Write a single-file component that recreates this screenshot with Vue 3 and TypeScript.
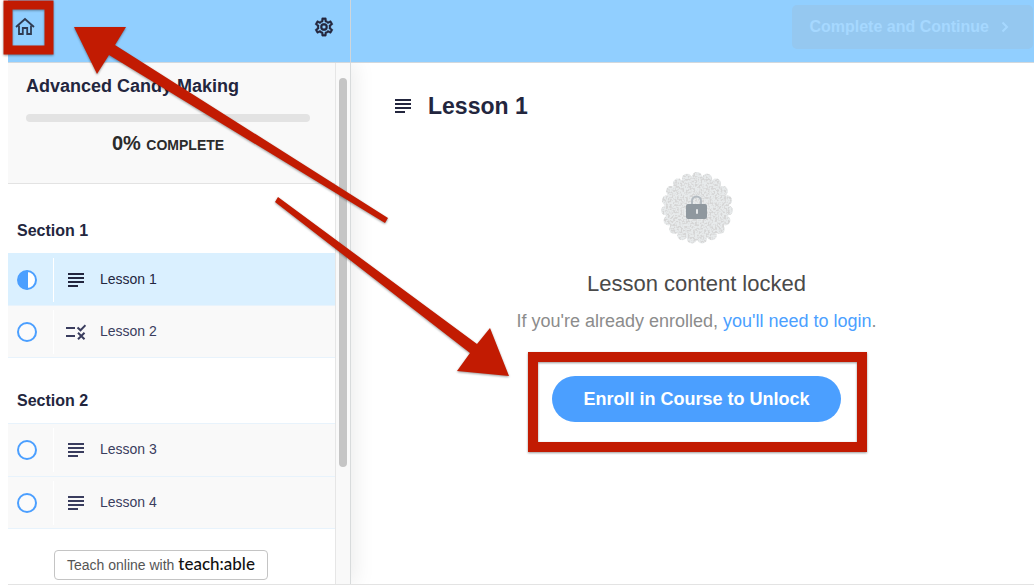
<script setup lang="ts">
type LessonKind = 'text' | 'quiz'

interface Lesson {
  title: string
  kind: LessonKind
  current: boolean
}

interface Section {
  title: string
  lessons: Lesson[]
}

const sections: Section[] = [
  {
    title: 'Section 1',
    lessons: [
      { title: 'Lesson 1', kind: 'text', current: true },
      { title: 'Lesson 2', kind: 'quiz', current: false },
    ],
  },
  {
    title: 'Section 2',
    lessons: [
      { title: 'Lesson 3', kind: 'text', current: false },
      { title: 'Lesson 4', kind: 'text', current: false },
    ],
  },
]

const scallopCount = 19
const scallops = Array.from({ length: scallopCount }, (_, i) => {
  const angle = (i * 2 * Math.PI) / scallopCount - Math.PI / 2
  return { cx: 36 + 31 * Math.cos(angle), cy: 36 + 31 * Math.sin(angle) }
})
</script>

<template>
  <div class="page">
    <header class="topbar">
      <div class="topbar-left">
        <a href="#" class="icon-link" aria-label="Home">
          <svg width="20" height="20" viewBox="0 0 20 20" fill="none" stroke="#2f3b52" stroke-width="1.8">
            <path d="M1 11 L10 3 L19 11" />
            <path d="M4 9.5 V18 H7.8 V12 H12.2 V18 H16 V9.5" />
          </svg>
        </a>
        <button type="button" class="icon-link" aria-label="Settings">
          <svg width="22" height="22" viewBox="0 0 24 24" fill="#23263e" stroke="#23263e" stroke-width="0.4">
            <path d="M19.43 12.98c.04-.32.07-.64.07-.98 0-.34-.03-.66-.07-.98l2.11-1.65c.19-.15.24-.42.12-.64l-2-3.46c-.09-.16-.26-.25-.44-.25-.06 0-.12.01-.17.03l-2.49 1c-.52-.4-1.08-.73-1.69-.98l-.38-2.65C14.46 2.18 14.25 2 14 2h-4c-.25 0-.46.18-.49.42l-.38 2.65c-.61.25-1.17.59-1.69.98l-2.49-1c-.06-.02-.12-.03-.18-.03-.17 0-.34.09-.43.25l-2 3.46c-.13.22-.07.49.12.64l2.11 1.65c-.04.32-.07.65-.07.98 0 .33.03.66.07.98l-2.11 1.65c-.19.15-.24.42-.12.64l2 3.46c.09.16.26.25.44.25.06 0 .12-.01.17-.03l2.49-1c.52.4 1.08.73 1.69.98l.38 2.65c.03.24.24.42.49.42h4c.25 0 .46-.18.49-.42l.38-2.65c.61-.25 1.17-.59 1.69-.98l2.49 1c.06.02.12.03.18.03.17 0 .34-.09.43-.25l2-3.46c.12-.22.07-.49-.12-.64l-2.11-1.65zm-1.98-1.71c.04.31.05.52.05.73 0 .21-.02.43-.05.73l-.14 1.13.89.7 1.08.84-.7 1.21-1.27-.51-1.04-.42-.9.68c-.43.32-.84.56-1.25.73l-1.06.43-.16 1.13-.2 1.35h-1.4l-.19-1.35-.16-1.13-1.06-.43c-.43-.18-.83-.41-1.23-.71l-.91-.7-1.06.43-1.27.51-.7-1.21 1.08-.84.89-.7-.14-1.13c-.03-.31-.05-.54-.05-.74s.02-.43.05-.73l.14-1.13-.89-.7-1.08-.84.7-1.21 1.27.51 1.04.42.9-.68c.43-.32.84-.56 1.25-.73l1.06-.43.16-1.13.2-1.35h1.39l.19 1.35.16 1.13 1.06.43c.43.18.83.41 1.23.71l.91.7 1.06-.43 1.27-.51.7 1.21-1.07.85-.89.7.14 1.13z" />
            <path fill-rule="evenodd" d="M12 8a4 4 0 1 0 0 8 4 4 0 0 0 0-8zm0 6a2 2 0 1 1 0-4 2 2 0 0 1 0 4z" />
          </svg>
        </button>
      </div>
      <div class="topbar-right">
        <button type="button" class="continue" disabled>
          <span>Complete and Continue</span>
          <svg width="8" height="12" viewBox="0 0 8 12" fill="none" stroke="currentColor" stroke-width="2">
            <path d="M1.5 1.5 L6 6 L1.5 10.5" />
          </svg>
        </button>
      </div>
    </header>

    <div class="body">
      <aside class="sidebar">
        <div class="sidebar-content">
          <div class="course">
            <h2>Advanced Candy Making</h2>
            <div class="progress" role="progressbar" aria-label="Course progress" aria-valuenow="0" aria-valuemin="0" aria-valuemax="100"></div>
            <p class="percent">0% <small>COMPLETE</small></p>
          </div>

          <section v-for="section in sections" :key="section.title" class="section">
            <h3>{{ section.title }}</h3>
            <ul>
              <li v-for="lesson in section.lessons" :key="lesson.title">
                <a href="#" class="lesson" :class="{ current: lesson.current }">
                  <span class="status">
                    <svg width="20" height="20" viewBox="0 0 20 20">
                      <circle cx="10" cy="10" r="9" fill="#fff" :fill-opacity="lesson.current ? 1 : 0.3" stroke="#4b9fff" stroke-width="2" />
                      <path v-if="lesson.current" d="M11 0.5 A9.5 9.5 0 1 0 11 19.5 Z" fill="#4b9fff" />
                    </svg>
                  </span>
                  <svg v-if="lesson.kind === 'text'" class="kind" width="20" height="16" viewBox="0 0 20 16" fill="currentColor">
                    <path d="M2 1h16v2H2zM2 5h16v2H2zM2 9h16v2H2zM2 13h10v2H2z" />
                  </svg>
                  <svg v-else class="kind" width="20" height="16" viewBox="0 0 20 16" fill="none" stroke="currentColor" stroke-width="2">
                    <path d="M0 4 H9 M0 12 H9" />
                    <path d="M11.5 3.5 L14.5 6.3 L19.5 1.2" />
                    <path d="M12 8.8 L18.5 15.2 M18.5 8.8 L12 15.2" />
                  </svg>
                  <span class="lesson-title">{{ lesson.title }}</span>
                </a>
              </li>
            </ul>
          </section>

          <a href="#" class="badge">Teach online with <strong>teach:able</strong></a>
        </div>
        <div class="track"><div class="thumb"></div></div>
      </aside>

      <main class="main">
        <h1>
          <svg width="16" height="14" viewBox="0 0 16 14" fill="currentColor">
            <path d="M0 0h16v2H0zM0 4h16v2H0zM0 8h16v2H0zM0 12h10v2H0z" />
          </svg>
          Lesson 1
        </h1>
        <div class="locked">
          <svg class="seal" width="72" height="72" viewBox="0 0 72 72">
            <defs>
              <filter id="grain" x="0" y="0" width="100%" height="100%" color-interpolation-filters="sRGB">
                <feTurbulence type="fractalNoise" baseFrequency="0.55" numOctaves="1" seed="4" />
                <feColorMatrix values="0 0 0 0 0.84  0 0 0 0 0.84  0 0 0 0 0.84  6 0 0 0 -2.7" />
                <feComposite in2="SourceGraphic" operator="in" result="specks" />
                <feMerge>
                  <feMergeNode in="SourceGraphic" />
                  <feMergeNode in="specks" />
                </feMerge>
              </filter>
            </defs>
            <g filter="url(#grain)" fill="#e7eaeb">
              <circle cx="36" cy="36" r="32" />
              <circle v-for="(dot, i) in scallops" :key="i" :cx="dot.cx" :cy="dot.cy" r="5" />
            </g>
            <path d="M31 33 V29 a4.5 4.5 0 0 1 9 0 V33" fill="none" stroke="#b3bac0" stroke-width="2" />
            <rect x="25" y="32" width="21" height="15" rx="2" fill="#8f989f" />
            <rect x="35" y="37" width="2" height="5" rx="1" fill="#e4e7e9" />
          </svg>
          <h2>Lesson content locked</h2>
          <p>If you're already enrolled, <a href="#">you'll need to login</a>.</p>
          <button type="button" class="enroll">Enroll in Course to Unlock</button>
        </div>
      </main>
    </div>

    <svg class="annotations" width="880" height="470" viewBox="0 0 880 470" aria-hidden="true">
      <g fill="#c21b02">
        <path d="M74 27 L126 27 L115 45 L388 218 L385 223 L109 55 L97 74 Z" />
        <path d="M278 197 L477 344 L490 328 L509 376 L457 371 L470 353 L275 202 Z" />
      </g>
      <g fill="none" stroke="#c21b02">
        <rect x="8" y="5" width="41" height="45" stroke-width="9" />
        <rect x="533" y="357" width="329" height="90" stroke-width="10" />
      </g>
    </svg>
  </div>
</template>

<style>
body {
  margin: 0;
  background: #fff;
}
</style>

<style scoped>
.page {
  position: relative;
  box-sizing: border-box;
  display: flex;
  flex-direction: column;
  min-height: 100vh;
  padding-left: 8px;
  font-family: "Liberation Sans", Arial, Helvetica, sans-serif;
  color: #23263e;
}

h1, h2, h3, p, ul {
  margin: 0;
  padding: 0;
}

ul {
  list-style: none;
}

a {
  color: inherit;
  text-decoration: none;
}

button {
  border: 0;
  font-family: inherit;
}

.topbar {
  display: flex;
  height: 62px;
  background: #91cfff;
  border-bottom: 1px solid #d2d8dd;
}

.topbar-left {
  box-sizing: border-box;
  flex: 0 0 343px;
  display: flex;
  align-items: flex-start;
  justify-content: space-between;
  padding: 16px 15px 0 7px;
  border-right: 1px solid #cfd6db;
}

.icon-link {
  display: flex;
  padding: 0;
  background: none;
}

.topbar-right {
  flex: 1;
  display: flex;
  align-items: flex-start;
  justify-content: flex-end;
  padding: 5px 1px 0 0;
}

.continue {
  display: flex;
  align-items: center;
  gap: 12px;
  height: 44px;
  padding: 0 24px 0 17px;
  border-radius: 5px;
  background: #95c8f0;
  color: #a6d8ff;
  font-size: 16px;
  font-weight: 700;
}

.body {
  flex: 1;
  display: flex;
  border-bottom: 1px solid #e3e3e3;
}

.sidebar {
  box-sizing: border-box;
  flex: 0 0 343px;
  display: flex;
  border-right: 1px solid #d8dbdc;
  box-shadow: 4px 0 20px rgba(0, 0, 0, 0.08);
  clip-path: inset(0 -30px 0 0);
}

.sidebar-content {
  flex: 1;
  display: flex;
  flex-direction: column;
}

.track {
  box-sizing: border-box;
  flex: 0 0 15px;
  padding: 15px 2px 0 3px;
  background: #f9f9f9;
  border-left: 1px solid #e6e6e6;
}

.thumb {
  width: 8px;
  height: 389px;
  border-radius: 4px;
  background: #c5c5c5;
}

.course {
  box-sizing: border-box;
  height: 121px;
  padding: 12px 25px 0 18px;
  background: #f9f9f9;
  border-bottom: 1px solid #e3e3e3;
}

.course h2 {
  font-size: 18px;
  line-height: 22px;
}

.progress {
  height: 8px;
  margin-top: 17px;
  border-radius: 4px;
  background: #e3e3e3;
}

.percent {
  margin-top: 9px;
  color: #2b2b2b;
  font-size: 20px;
  font-weight: 700;
  line-height: 24px;
  text-align: center;
}

.percent small {
  font-size: 14px;
}

.section h3 {
  padding: 36px 9px 11px;
  font-size: 16px;
  line-height: 22px;
}

.section + .section h3 {
  padding-top: 32px;
}

.lesson {
  box-sizing: border-box;
  display: flex;
  align-items: center;
  height: 53px;
  background: #f9f9f9;
  border-top: 1px solid #e8f3fc;
  color: #3a3d5e;
  font-size: 14px;
}

.section li:last-child .lesson {
  border-bottom: 1px solid #e8f3fc;
}

.lesson.current {
  height: 52px;
  background: #daf0ff;
  border-color: #daf0ff;
  color: #23263e;
}

.lesson-title {
  padding-bottom: 2px;
}

.status {
  display: flex;
  align-items: center;
  box-sizing: border-box;
  width: 46px;
  height: 44px;
  padding-left: 9px;
  border-right: 1px solid #fff;
}

.kind {
  margin: 0 14px 0 12px;
}

.badge {
  box-sizing: border-box;
  align-self: flex-start;
  height: 30px;
  margin: 21px 0 4px 46px;
  padding: 0 12px;
  border: 1px solid #c4c4c4;
  border-radius: 4px;
  background: #fff;
  color: #555;
  font-size: 14px;
  line-height: 28px;
}

.badge strong {
  color: #111;
  font-family: Lato, sans-serif;
  font-size: 17px;
  font-weight: 500;
  line-height: 20px;
}

.main {
  flex: 1;
  padding: 29px 0 0 44px;
}

.main h1 {
  display: flex;
  align-items: center;
  gap: 17px;
  font-size: 23px;
  line-height: 28px;
}

.locked {
  display: flex;
  flex-direction: column;
  align-items: center;
  margin-left: -36px;
  padding-top: 52px;
}

.locked h2 {
  margin-top: 27px;
  color: #4a4a4a;
  font-size: 22px;
  font-weight: 400;
  line-height: 26px;
}

.locked p {
  margin-top: 13px;
  color: #8c8c8c;
  font-size: 18px;
  line-height: 22px;
}

.locked p a {
  color: #4b9fff;
}

.enroll {
  height: 46px;
  margin-top: 44px;
  padding: 0 31px;
  border-radius: 23px;
  background: #4b9fff;
  color: #fff;
  font-size: 18px;
  font-weight: 700;
}

.annotations {
  position: absolute;
  top: 0;
  left: 0;
  pointer-events: none;
  filter: drop-shadow(0 1px 1px rgba(0, 0, 0, 0.4));
}
</style>
